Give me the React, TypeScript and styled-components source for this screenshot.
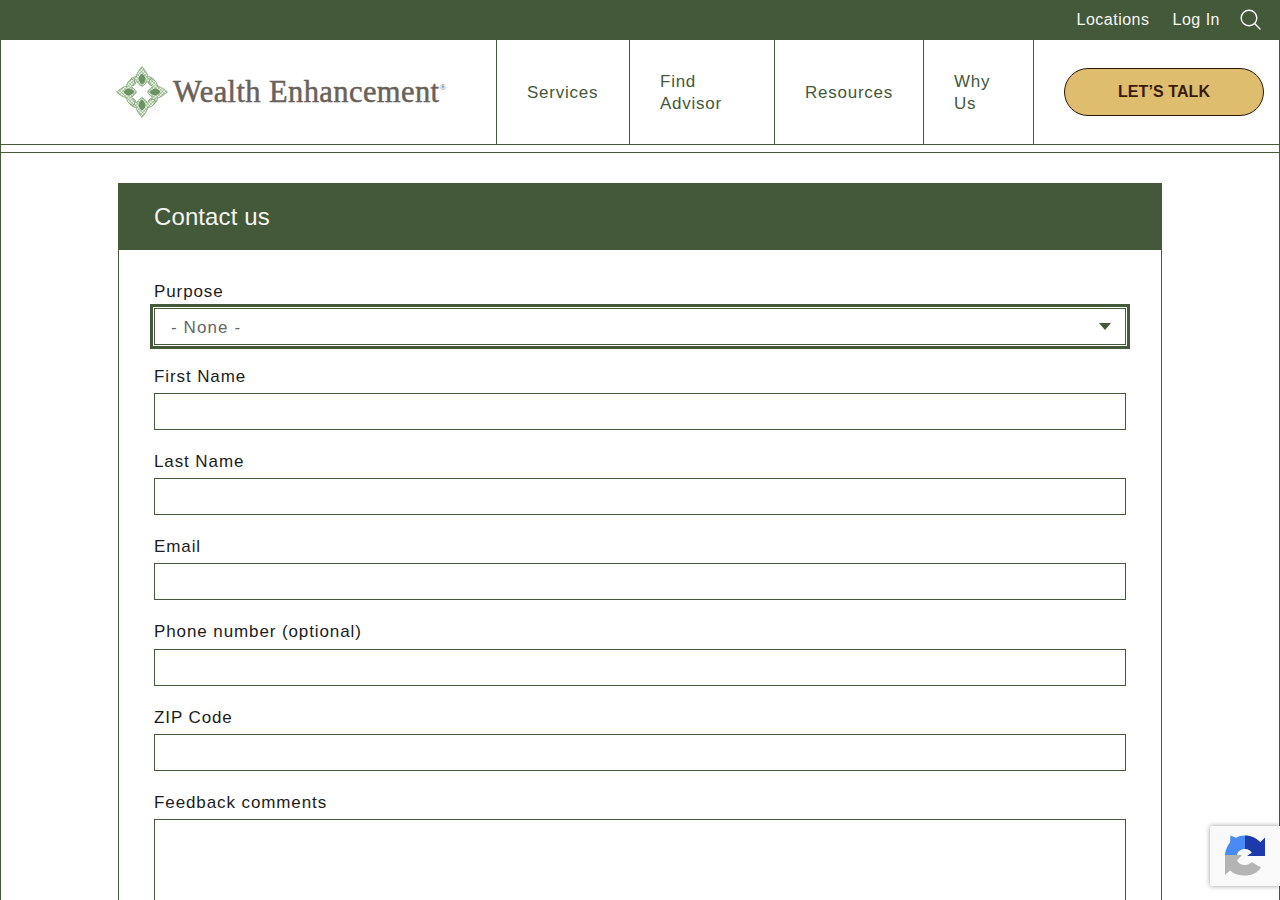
import React from "react";
import styled, { createGlobalStyle } from "styled-components";

const GREEN = "#44593a";

const Global = createGlobalStyle`
  html, body { margin: 0; padding: 0; height: 900px; overflow: hidden; background: #fff; }
  body { font-family: "Liberation Sans", Arial, sans-serif; color: #1a1a1a; }
  * { box-sizing: border-box; }
`;

const Page = styled.div`
  width: 1280px;
  height: 900px;
  overflow: hidden;
`;

const TopBar = styled.div`
  height: 40px;
  background: ${GREEN};
  display: flex;
  align-items: center;
  justify-content: flex-end;
  padding-right: 19px;
`;

const TopLink = styled.a`
  color: #f6f7f4;
  font-size: 16px;
  letter-spacing: 0.5px;
  margin-right: 23px;
  &:last-of-type { margin-right: 20px; }
`;

const SearchButton = styled.span`
  display: flex;
  width: 21px;
  height: 21px;
  margin-top: -1px;
`;

const Frame = styled.div`
  border-left: 1px solid ${GREEN};
  border-right: 1px solid ${GREEN};
  height: 860px;
`;

const Header = styled.header`
  display: flex;
  height: 105px;
  border-bottom: 1px solid ${GREEN};
`;

const LogoCell = styled.div`
  width: 495px;
  display: flex;
  align-items: center;
  padding: 0 0 0 115px;
`;

const LogoText = styled.span`
  font-family: "Liberation Serif", serif;
  font-size: 30.5px;
  color: #6a6158;
  margin-left: 5px;
  letter-spacing: 0.4px;
  white-space: nowrap;
  -webkit-text-stroke: 0.5px #6a6158;
`;

const LogoMark = styled.sup`
  font-size: 9px;
  vertical-align: 12px;
  line-height: 0;
  letter-spacing: 0;
  -webkit-text-stroke: 0;
`;

const NavItem = styled.a<{ $width: number }>`
  width: ${(p) => p.$width}px;
  border-left: 1px solid ${GREEN};
  padding: 2px 29px 0 30px;
  display: flex;
  align-items: center;
  color: ${GREEN};
  font-size: 17px;
  line-height: 22px;
  letter-spacing: 0.75px;
`;

const CtaCell = styled.div`
  flex: 1;
  border-left: 1px solid ${GREEN};
  padding-left: 30px;
  display: flex;
  align-items: center;
`;

const Cta = styled.button`
  width: 200px;
  height: 48px;
  border-radius: 24px;
  border: 1px solid #2f1708;
  background: #dfbd6f;
  color: #3a1a0c;
  font-family: inherit;
  font-weight: 700;
  font-size: 16px;
  letter-spacing: 0.1px;
  padding: 0;
`;

const SubRule = styled.div`
  height: 8px;
  border-bottom: 1px solid ${GREEN};
  margin-bottom: 30px;
`;

const Card = styled.section`
  width: 1044px;
  margin-left: 117px;
  border: 1px solid ${GREEN};
  border-top: 0;
`;

const CardTitle = styled.h1`
  margin: 0 -1px;
  height: 67px;
  background: ${GREEN};
  color: #f4f5f2;
  font-weight: 400;
  font-size: 24px;
  letter-spacing: 0.1px;
  line-height: 67px;
  padding-left: 36px;
`;

const Form = styled.form`
  padding: 31.6px 35px 40px;
  display: flex;
  flex-direction: column;
  gap: 22px;
`;

const Field = styled.div`
  display: flex;
  flex-direction: column;
`;

const Label = styled.label`
  display: block;
  height: 20px;
  line-height: 20px;
  margin-bottom: 6.2px;
  font-size: 17px;
  letter-spacing: 0.9px;
  color: #1c1c1c;
`;

const Input = styled.input`
  display: block;
  width: 100%;
  height: 37px;
  border: 1px solid ${GREEN};
  border-radius: 0;
  background: #fff;
  outline: none;
`;

const SelectWrap = styled.div`
  position: relative;
  height: 37px;
  &::after {
    content: "";
    position: absolute;
    right: 15px;
    top: 15px;
    border-left: 6px solid transparent;
    border-right: 6px solid transparent;
    border-top: 7px solid ${GREEN};
  }
`;

const Select = styled.select`
  display: block;
  width: 100%;
  height: 37px;
  appearance: none;
  border: 1px solid ${GREEN};
  border-radius: 0;
  background: #fff;
  padding: 2px 16px 0;
  font-family: inherit;
  font-size: 17px;
  letter-spacing: 1.1px;
  color: #666;
  outline: 3px solid ${GREEN};
  outline-offset: 1px;
`;

const TextArea = styled.textarea`
  display: block;
  width: 100%;
  height: 160px;
  border: 1px solid ${GREEN};
  border-radius: 0;
  resize: none;
  outline: none;
`;

const Badge = styled.div`
  position: fixed;
  right: 0;
  top: 826px;
  width: 70px;
  height: 60px;
  background: #f9f9f9;
  border-radius: 2px 0 0 2px;
  box-shadow: 0 0 5px rgba(0, 0, 0, 0.4);
  padding: 8px 0 0 14px;
`;

const Leaf = () => (
  <g>
    <path d="M26 0.5C22 5.5 19.5 9 20 13C20.5 16.5 23 18.5 26 20.5C29 18.5 31.5 16.5 32 13C32.5 9 30 5.5 26 0.5Z" fill="url(#hatch)" stroke="#6f9a62" strokeWidth="0.7" />
    <path d="M26 7.5C23.5 9.5 22.3 11.5 22.7 14C23.5 16.2 25 17.5 26 18.5C27 17.5 28.5 16.2 29.3 14C29.7 11.5 28.5 9.5 26 7.5Z" fill="#55814a" fillOpacity="0.8" />
    <path d="M20.5 10.5C17.5 10.5 15 12 13.8 14.5C13 16 12.6 17.5 13 19C15 18 16.5 18.5 17.8 19.5C18.2 17.8 19.5 16 21.5 15.5" fill="url(#hatch)" stroke="#6f9a62" strokeWidth="0.7" />
    <path d="M31.5 10.5C34.5 10.5 37 12 38.2 14.5C39 16 39.4 17.5 39 19C37 18 35.5 18.5 34.2 19.5C33.8 17.8 32.5 16 30.5 15.5" fill="url(#hatch)" stroke="#6f9a62" strokeWidth="0.7" />
  </g>
);

const Emblem = () => (
  <svg width="52" height="52" viewBox="0 0 52 52" aria-hidden="true">
    <defs>
      <pattern id="hatch" width="2.4" height="2.4" patternUnits="userSpaceOnUse" patternTransform="rotate(45)">
        <rect width="2.4" height="2.4" fill="#eef4ea" />
        <path d="M0 0H2.4M0 0V2.4" stroke="#6c9860" strokeWidth="0.8" />
      </pattern>
    </defs>
    <Leaf />
    <g transform="rotate(90 26 26)"><Leaf /></g>
    <g transform="rotate(180 26 26)"><Leaf /></g>
    <g transform="rotate(270 26 26)"><Leaf /></g>
  </svg>
);

const RecaptchaIcon = () => (
  <svg width="42" height="44" viewBox="0 0 42 44" aria-hidden="true">
    <path d="M21 1.5C17.5 1.5 14.5 2.3 12 3.7L6.5 1.5L6 8.5C3 12 1.3 16.5 1 21H13C13.6 17.5 16.8 15 21 15Z" fill="#4a8af4" />
    <path d="M21 1.5V15C24 15 26.5 16.5 27.8 18.8L23 22H41V3.5L36.3 8.2C32.6 4.2 27.2 1.5 21 1.5Z" fill="#1c3aa9" />
    <path d="M1 21H18L13 26.5C14.5 29.5 17.5 31 21 31C24 31 26 30 27.6 28L37 33.5C33.5 39 27.5 41.5 20.5 41.5C14.8 41.5 9.6 39.8 6 36.5L1 41Z" fill="#b4b4b4" />
  </svg>
);

export default function App() {
  const fields = ["First Name", "Last Name", "Email", "Phone number (optional)", "ZIP Code"];
  return (
    <Page>
      <Global />
      <TopBar>
        <TopLink>Locations</TopLink>
        <TopLink>Log In</TopLink>
        <SearchButton>
          <svg width="21" height="21" viewBox="0 0 21 21" fill="none" stroke="#fff" strokeWidth="1.4" aria-hidden="true">
            <circle cx="9" cy="9" r="7.8" />
            <path d="M14.6 14.6L20 20" strokeLinecap="round" />
          </svg>
        </SearchButton>
      </TopBar>
      <Frame>
        <Header>
          <LogoCell>
            <Emblem />
            <LogoText>
              Wealth Enhancement<LogoMark>®</LogoMark>
            </LogoText>
          </LogoCell>
          <NavItem $width={133}>Services</NavItem>
          <NavItem $width={145}>Find Advisor</NavItem>
          <NavItem $width={149}>Resources</NavItem>
          <NavItem $width={110}>Why Us</NavItem>
          <CtaCell>
            <Cta type="button">LET’S TALK</Cta>
          </CtaCell>
        </Header>
        <SubRule />
        <Card>
          <CardTitle>Contact us</CardTitle>
          <Form>
            <Field>
              <Label>Purpose</Label>
              <SelectWrap>
                <Select defaultValue="none">
                  <option value="none">- None -</option>
                </Select>
              </SelectWrap>
            </Field>
            {fields.map((f) => (
              <Field key={f}>
                <Label>{f}</Label>
                <Input type="text" />
              </Field>
            ))}
            <Field>
              <Label>Feedback comments</Label>
              <TextArea />
            </Field>
          </Form>
        </Card>
      </Frame>
      <Badge>
        <RecaptchaIcon />
      </Badge>
    </Page>
  );
}
